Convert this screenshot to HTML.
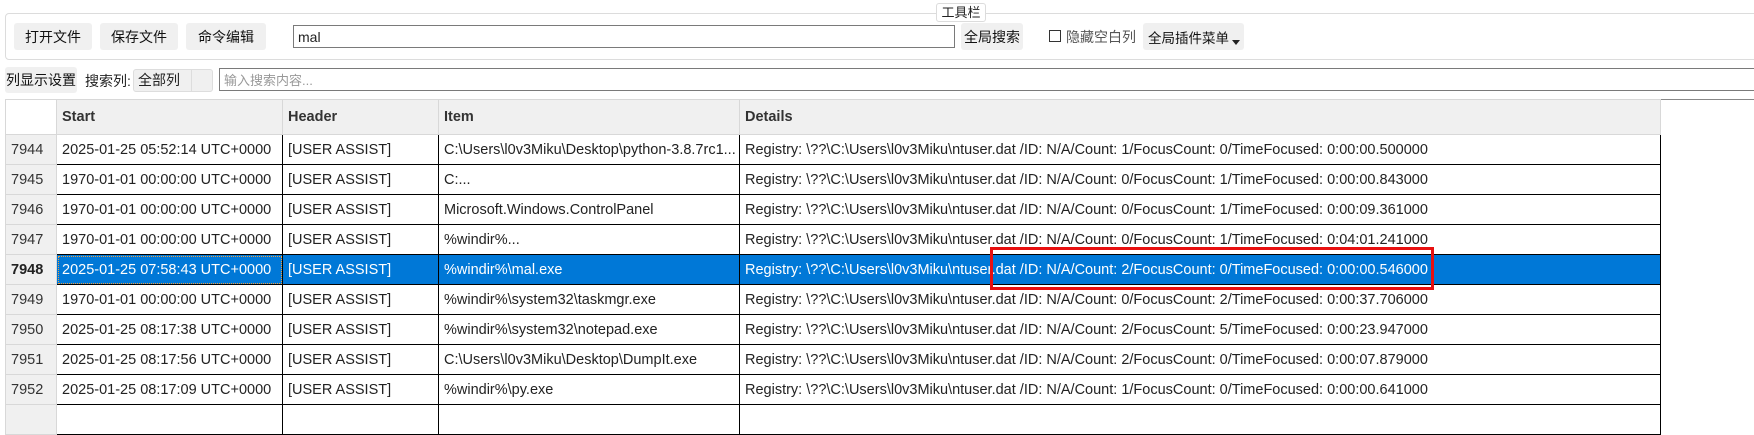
<!DOCTYPE html>
<html><head><meta charset="utf-8"><style>
*{box-sizing:border-box;margin:0;padding:0}
body{width:1754px;height:414px;overflow:hidden;background:#fff;font-family:"Liberation Sans","Noto Sans CJK SC",sans-serif;font-size:14.5px;color:#222;position:relative}
.a{position:absolute;white-space:nowrap}
.btn{position:absolute;background:#f0f0f0;border-radius:3px;display:flex;align-items:center;justify-content:center;font-size:14px;color:#111;white-space:nowrap}
.gb{left:5px;top:13px;width:1760px;height:47px;border:1px solid #dcdcdc;border-radius:4px}
.inp{position:absolute;border:1px solid #7a7a7a;background:#fff;padding-left:4px;display:flex;align-items:center}
table{position:absolute;left:5px;top:99px;border-collapse:collapse;table-layout:fixed}
td{height:30px;border:1px solid #000;padding-left:5px;white-space:nowrap;overflow:hidden;text-overflow:clip}
td.rh{background:#f0f0f0;border:1px solid #d8d8d8;color:#333;padding-left:5px}
tr.h td{background:#f0f0f0;border:1px solid #d8d8d8;font-weight:bold;height:35px;color:#333}
tr.sel td{background:#0078d7;color:#fff}
tr.sel td.rh{background:#f0f0f0;color:#222;font-weight:bold}
tr.sel td.f{outline:1px dotted #f0a040;outline-offset:-2px}
</style></head><body>
<div class="a gb"></div>
<div class="a" style="left:936px;top:3px;width:50px;height:19px;background:#fff;border:1px solid #dcdcdc;border-radius:3px;font-size:13px;text-align:center;line-height:17px">工具栏</div>
<div class="btn" style="left:14px;top:23px;width:78px;height:27px">打开文件</div>
<div class="btn" style="left:100px;top:23px;width:78px;height:27px">保存文件</div>
<div class="btn" style="left:186px;top:23px;width:80px;height:27px">命令编辑</div>
<div class="inp" style="left:293px;top:25px;width:662px;height:23px;font-size:14px">mal</div>
<div class="btn" style="left:961px;top:23px;width:62px;height:27px">全局搜索</div>
<div class="a" style="left:1049px;top:30px;width:12px;height:12px;border:1px solid #333"></div>
<div class="a" style="left:1066px;top:27px;font-size:14px;color:#555">隐藏空白列</div>
<div class="btn" style="left:1143px;top:23px;width:101px;height:27px;justify-content:flex-start;padding-left:5px;font-size:13.5px">全局插件菜单<span style="position:absolute;right:4px;top:17px;width:0;height:0;border-left:4px solid transparent;border-right:4px solid transparent;border-top:5px solid #222"></span></div>
<div class="btn" style="left:5px;top:67px;width:72px;height:26px">列显示设置</div>
<div class="a" style="left:85px;top:71px;font-size:14px">搜索列:</div>
<div class="a" style="left:133px;top:69px;width:80px;height:23px;background:#f0f0f0;border:1px solid #ddd;border-radius:3px;font-size:14px;padding-left:4px;line-height:21px">全部列<span style="position:absolute;left:57px;top:0;height:21px;border-left:1px solid #ddd"></span></div>
<div class="inp" style="left:219px;top:68px;width:1540px;height:23px;font-size:13px;color:#999">输入搜索内容...</div>
<div class="a" style="left:5px;top:99px;width:1760px;height:1px;background:#888"></div>
<div class="a" style="left:5px;top:99px;width:1px;height:320px;background:#888"></div>
<table>
<colgroup><col style="width:51px"><col style="width:226px"><col style="width:156px"><col style="width:301px"><col style="width:921px"></colgroup>
<tr class="h"><td class="rh" style="background:#fff"></td><td>Start</td><td>Header</td><td>Item</td><td>Details</td></tr>
<tr><td class="rh">7944</td><td>2025-01-25 05:52:14 UTC+0000</td><td>[USER ASSIST]</td><td>C:\Users\l0v3Miku\Desktop\python-3.8.7rc1...</td><td>Registry: \??\C:\Users\l0v3Miku\ntuser.dat /ID: N/A/Count: 1/FocusCount: 0/TimeFocused: 0:00:00.500000</td></tr>
<tr><td class="rh">7945</td><td>1970-01-01 00:00:00 UTC+0000</td><td>[USER ASSIST]</td><td>C:...</td><td>Registry: \??\C:\Users\l0v3Miku\ntuser.dat /ID: N/A/Count: 0/FocusCount: 1/TimeFocused: 0:00:00.843000</td></tr>
<tr><td class="rh">7946</td><td>1970-01-01 00:00:00 UTC+0000</td><td>[USER ASSIST]</td><td>Microsoft.Windows.ControlPanel</td><td>Registry: \??\C:\Users\l0v3Miku\ntuser.dat /ID: N/A/Count: 0/FocusCount: 1/TimeFocused: 0:00:09.361000</td></tr>
<tr><td class="rh">7947</td><td>1970-01-01 00:00:00 UTC+0000</td><td>[USER ASSIST]</td><td>%windir%...</td><td>Registry: \??\C:\Users\l0v3Miku\ntuser.dat /ID: N/A/Count: 0/FocusCount: 1/TimeFocused: 0:04:01.241000</td></tr>
<tr class="sel"><td class="rh">7948</td><td class="f">2025-01-25 07:58:43 UTC+0000</td><td>[USER ASSIST]</td><td>%windir%\mal.exe</td><td>Registry: \??\C:\Users\l0v3Miku\ntuser.dat /ID: N/A/Count: 2/FocusCount: 0/TimeFocused: 0:00:00.546000</td></tr>
<tr><td class="rh">7949</td><td>1970-01-01 00:00:00 UTC+0000</td><td>[USER ASSIST]</td><td>%windir%\system32\taskmgr.exe</td><td>Registry: \??\C:\Users\l0v3Miku\ntuser.dat /ID: N/A/Count: 0/FocusCount: 2/TimeFocused: 0:00:37.706000</td></tr>
<tr><td class="rh">7950</td><td>2025-01-25 08:17:38 UTC+0000</td><td>[USER ASSIST]</td><td>%windir%\system32\notepad.exe</td><td>Registry: \??\C:\Users\l0v3Miku\ntuser.dat /ID: N/A/Count: 2/FocusCount: 5/TimeFocused: 0:00:23.947000</td></tr>
<tr><td class="rh">7951</td><td>2025-01-25 08:17:56 UTC+0000</td><td>[USER ASSIST]</td><td>C:\Users\l0v3Miku\Desktop\DumpIt.exe</td><td>Registry: \??\C:\Users\l0v3Miku\ntuser.dat /ID: N/A/Count: 2/FocusCount: 0/TimeFocused: 0:00:07.879000</td></tr>
<tr><td class="rh">7952</td><td>2025-01-25 08:17:09 UTC+0000</td><td>[USER ASSIST]</td><td>%windir%\py.exe</td><td>Registry: \??\C:\Users\l0v3Miku\ntuser.dat /ID: N/A/Count: 1/FocusCount: 0/TimeFocused: 0:00:00.641000</td></tr>
<tr><td class="rh"></td><td></td><td></td><td></td><td></td></tr>
</table>
<div class="a" style="left:990px;top:247px;width:444px;height:43px;border:3px solid #e81010"></div>
</body></html>
